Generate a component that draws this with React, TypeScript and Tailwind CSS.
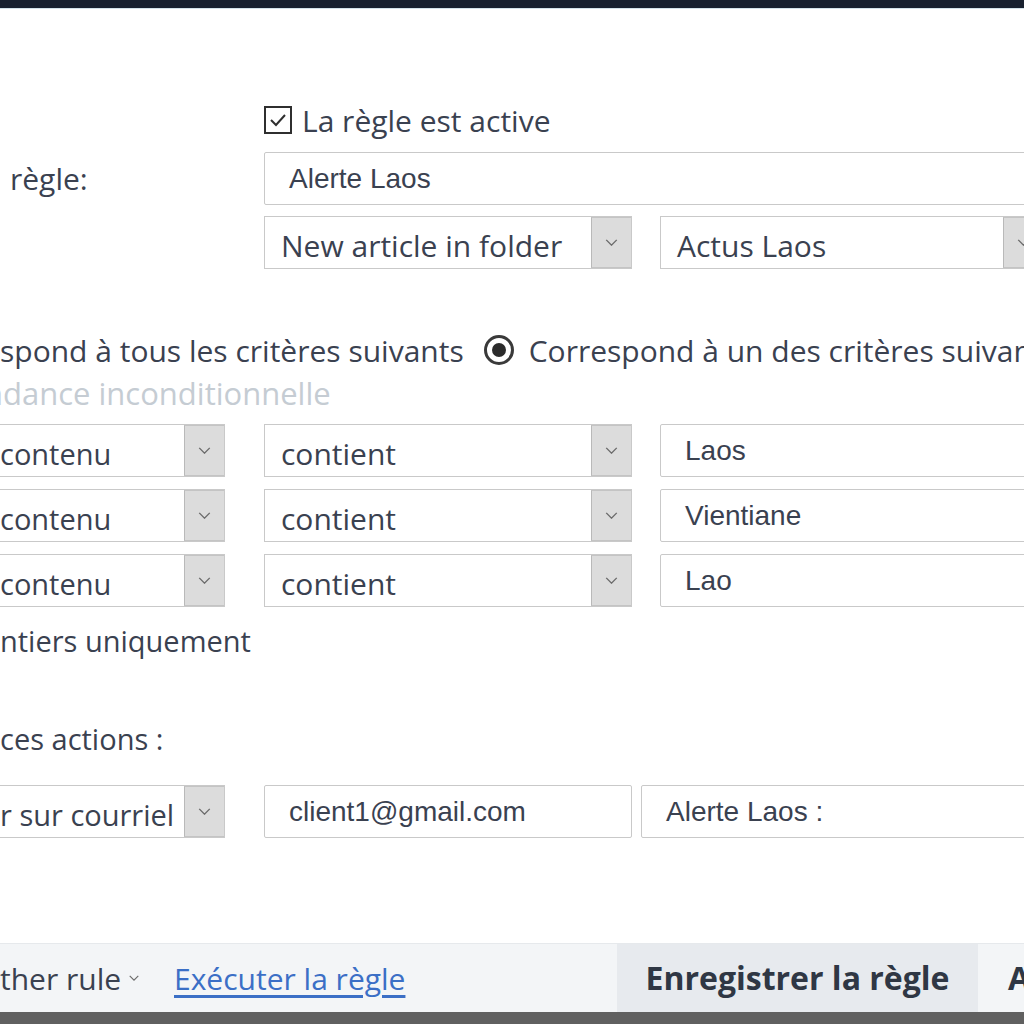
import { ReactNode } from 'react'

const ui = "font-['Open_Sans',sans-serif]"
const field = "font-['Liberation_Sans',Arial,sans-serif]"

function Chevron({ className = 'w-[13px] h-[7px]' }: { className?: string }) {
  return (
    <svg viewBox="0 0 14 8" className={className} fill="none" stroke="#6b6b6b" strokeWidth="1.6">
      <path d="M1 1l6 6 6-6" />
    </svg>
  )
}

function Select({ value, width, noLeft }: { value: string; width: string; noLeft?: boolean }) {
  return (
    <div
      className={`flex h-[53px] shrink-0 bg-white border border-[#c9c9c9] ${noLeft ? 'border-l-0' : ''} ${width}`}
    >
      <div
        className={`flex-1 min-w-0 overflow-hidden whitespace-nowrap pt-[9px] ${noLeft ? 'pl-0 text-[29px]' : 'pl-[16px] text-[30px]'} leading-[40px] text-[#3a4150] ${ui}`}
      >
        {value}
      </div>
      <div className="w-[40px] shrink-0 flex items-center justify-center bg-[#dcdcdc] border-l border-[#b9b9b9] border-y border-y-[#c4c4c4]">
        <Chevron />
      </div>
    </div>
  )
}

function Input({ value, className }: { value: string; className: string }) {
  return (
    <div
      className={`flex items-center h-[53px] shrink-0 bg-white border border-[#c9c9c9] rounded-[2px] pl-[24px] text-[28px] text-[#3a4150] whitespace-nowrap ${field} ${className}`}
    >
      {value}
    </div>
  )
}

function Line({ children, className = '' }: { children: ReactNode; className?: string }) {
  return (
    <div className={`flex items-center whitespace-nowrap text-[#3a4150] ${ui} ${className}`}>
      {children}
    </div>
  )
}

const criteria = ['Laos', 'Vientiane', 'Lao']

export default function App() {
  return (
    <div className="w-[1024px] h-[1024px] overflow-hidden bg-white flex flex-col">
      <div className="h-[8px] shrink-0 bg-[#18202f] border-b border-[#d3e2ea] box-content" />

      {/* rule header */}
      <div className="mt-[91px] h-[40px] flex items-center pl-[264px] gap-[10px]">
        <div className="w-[28px] h-[28px] shrink-0 border-2 border-[#2f2f2f] bg-white flex items-center justify-center">
          <svg viewBox="0 0 20 20" className="w-[20px] h-[20px]" fill="none" stroke="#2f2f2f" strokeWidth="2">
            <path d="M3 10l5 5 9-10" />
          </svg>
        </div>
        <Line className="text-[30px]">La règle est active</Line>
      </div>

      <div className="mt-[12px] flex h-[53px]">
        <Line className="w-[264px] pl-[10px] shrink-0 text-[30px]">règle:</Line>
        <Input value="Alerte Laos" className="w-[800px]" />
      </div>

      <div className="mt-[11px] flex pl-[264px] gap-[28px]">
        <Select value="New article in folder" width="w-[368px]" />
        <Select value="Actus Laos" width="w-[384px]" />
      </div>

      {/* match mode */}
      <Line className="mt-[61px] h-[40px] text-[30px]">
        <span className="shrink-0">spond à tous les critères suivants</span>
        <span className="shrink-0 ml-[20px] mr-[15px] w-[30px] h-[30px] rounded-full border-[3px] border-[#3a3a3a] flex items-center justify-center">
          <span className="w-[14px] h-[14px] rounded-full bg-[#2b2b2b]" />
        </span>
        <span className="shrink-0">Correspond à un des critères suivants</span>
      </Line>

      <div className="mt-[8px] h-[30px] overflow-hidden">
        <Line className="h-[30px] -ml-[16px] text-[31px] text-[#c5ccd3]">ndance inconditionnelle</Line>
      </div>

      <div className="mt-[16px] flex flex-col gap-[12px]">
        {criteria.map((c) => (
          <div key={c} className="flex">
            <Select value="contenu" width="w-[225px]" noLeft />
            <div className="ml-[39px]">
              <Select value="contient" width="w-[368px]" />
            </div>
            <Input value={c} className="ml-[28px] w-[400px]" />
          </div>
        ))}
      </div>

      <Line className="mt-[14px] h-[40px] text-[29px]">ntiers uniquement</Line>

      <Line className="mt-[58px] h-[40px] text-[29px]">ces actions :</Line>

      <div className="mt-[26px] flex">
        <Select value="r sur courriel" width="w-[225px]" noLeft />
        <Input value="client1@gmail.com" className="ml-[39px] w-[368px]" />
        <Input value="Alerte Laos :" className="ml-[9px] w-[400px]" />
      </div>

      <div className="flex-1" />

      {/* footer */}
      <div className={`h-[69px] shrink-0 flex items-stretch bg-[#f3f5f7] border-t border-[#e6e9ec] text-[30px] ${ui}`}>
        <div className="w-[174px] shrink-0 flex items-center text-[#3a4150] whitespace-nowrap">
          <span>ther rule</span>
          <Chevron className="ml-[8px] w-[10px] h-[6px]" />
        </div>
        <div className="w-[443px] shrink-0 flex items-center text-[#3b6fc6] underline underline-offset-[5px] whitespace-nowrap">
          Exécuter la règle
        </div>
        <div className="w-[361px] shrink-0 flex items-center justify-center bg-[#e7eaee] text-[32px] font-bold text-[#2f3744] whitespace-nowrap">
          Enregistrer la règle
        </div>
        <div className="ml-[30px] flex items-center text-[32px] font-bold text-[#2f3744]">A</div>
      </div>
      <div className="h-[12px] shrink-0 bg-[#606060]" />
    </div>
  )
}
